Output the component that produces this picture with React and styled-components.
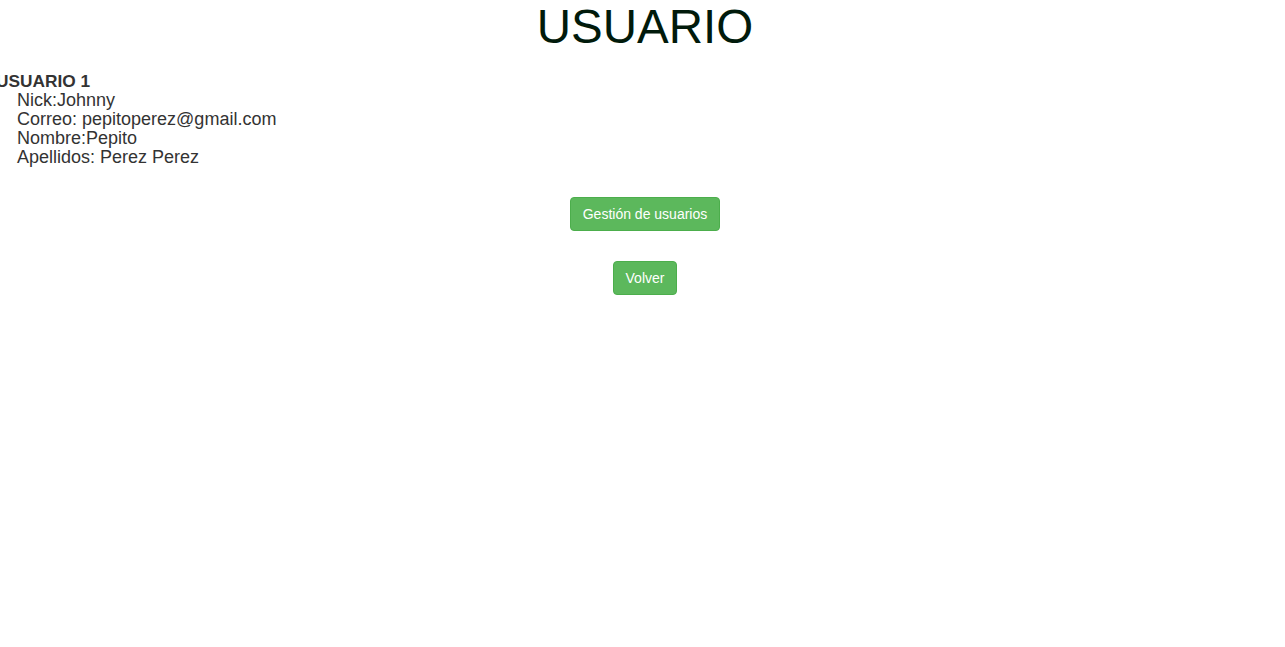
import React from "react";
import styled, { createGlobalStyle } from "styled-components";

const usuario = {
  numero: 1,
  nick: "Johnny",
  correo: "pepitoperez@gmail.com",
  nombre: "Pepito",
  apellidos: "Perez Perez",
};

const GlobalStyle = createGlobalStyle`
  body {
    margin: 0;
    background: #fff;
    font-family: "Liberation Sans", Arial, sans-serif;
    color: #333;
  }
`;

const Page = styled.div`
  display: flex;
  flex-direction: column;
`;

const Title = styled.h1`
  margin: 0;
  padding-top: 1px;
  padding-left: 5px;
  text-align: center;
  font-size: 47.5px;
  font-weight: 400;
  line-height: 52px;
  color: #011a0b;
`;

const UserList = styled.dl`
  margin: 19px 0 0 -2px;
  font-size: 18px;
  line-height: 19px;
`;

const UserName = styled.dt`
  margin-left: -2px;
  font-weight: 700;
  font-size: 17.3px;
`;

const UserField = styled.dd`
  margin-left: 19px;
`;

const Actions = styled.div`
  display: flex;
  flex-direction: column;
  align-items: center;
  gap: 30px;
  margin-top: 30px;
  padding-left: 5px;
`;

const Button = styled.button`
  font-family: "Liberation Sans", Arial, sans-serif;
  font-size: 14px;
  line-height: 20px;
  padding: 6px 12px;
  color: #fff;
  background: #5cb85c;
  border: 1px solid #4cae4c;
  border-radius: 4px;
  cursor: pointer;
`;

export default function App() {
  return (
    <Page>
      <GlobalStyle />
      <Title>USUARIO</Title>
      <UserList>
        <UserName>USUARIO {usuario.numero}</UserName>
        <UserField>Nick:{usuario.nick}</UserField>
        <UserField>Correo: {usuario.correo}</UserField>
        <UserField>Nombre:{usuario.nombre}</UserField>
        <UserField>Apellidos: {usuario.apellidos}</UserField>
      </UserList>
      <Actions>
        <Button>Gestión de usuarios</Button>
        <Button>Volver</Button>
      </Actions>
    </Page>
  );
}
